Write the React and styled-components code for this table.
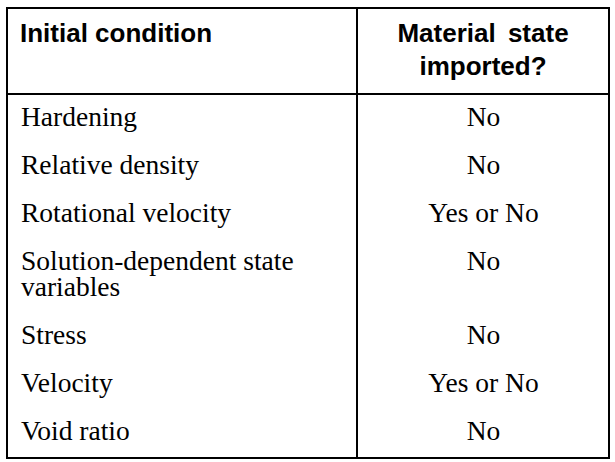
import React from "react";
import styled, { createGlobalStyle } from "styled-components";

const GlobalStyle = createGlobalStyle`
  html, body {
    margin: 0;
    padding: 0;
    background: #ffffff;
  }
`;

const Page = styled.div`
  padding: 7px 0 0 6px;
`;

const Table = styled.table`
  width: 604px;
  table-layout: fixed;
  border-collapse: collapse;
  border: 2px solid #000;
  color: #000;
`;

const Col = styled.col`
  width: ${(p) => p.$width || "auto"};
`;

const HeadCell = styled.th`
  padding: 8px 12px 10px;
  border-bottom: 2px solid #000;
  border-left: ${(p) => (p.$divider ? "2px solid #000" : "none")};
  font-family: "Liberation Sans", Arial, sans-serif;
  font-weight: bold;
  font-size: 26px;
  line-height: 33px;
  text-align: ${(p) => (p.$center ? "center" : "left")};
  word-spacing: ${(p) => (p.$center ? "5px" : "0")};
  vertical-align: top;
`;

const Cell = styled.td`
  padding: 9px 12px 13px 13px;
  border-left: ${(p) => (p.$divider ? "2px solid #000" : "none")};
  font-family: "Liberation Serif", "Times New Roman", serif;
  font-size: 27.5px;
  line-height: 26px;
  text-align: ${(p) => (p.$center ? "center" : "left")};
  vertical-align: top;
`;

const rows = [
  ["Hardening", "No"],
  ["Relative density", "No"],
  ["Rotational velocity", "Yes or No"],
  ["Solution-dependent state variables", "No"],
  ["Stress", "No"],
  ["Velocity", "Yes or No"],
  ["Void ratio", "No"],
];

export default function App() {
  return (
    <>
      <GlobalStyle />
      <Page>
        <Table>
          <colgroup>
            <Col $width="350px" />
            <Col />
          </colgroup>
          <thead>
            <tr>
              <HeadCell>Initial condition</HeadCell>
              <HeadCell $center $divider>
                Material state
                <br />
                imported?
              </HeadCell>
            </tr>
          </thead>
          <tbody>
            {rows.map(([name, imported]) => (
              <tr key={name}>
                <Cell>{name}</Cell>
                <Cell $center $divider>
                  {imported}
                </Cell>
              </tr>
            ))}
          </tbody>
        </Table>
      </Page>
    </>
  );
}
